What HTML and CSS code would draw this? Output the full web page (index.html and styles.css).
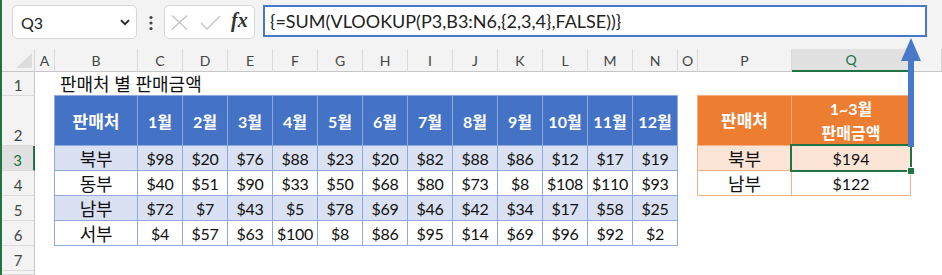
FILE: index.html
```html
<!DOCTYPE html>
<html lang="ko">
<head>
  <meta charset="UTF-8">
  <title>판매처 별 판매금액</title>
  <link rel="stylesheet" href="styles.css">
</head>
<body>
  <div class="app">
    <div class="toolbar">
      <div class="namebox">
        <span>Q3</span>
        <svg width="10" height="7" viewBox="0 0 10 7"><path d="M1 1.2 L5 5.2 L9 1.2" fill="none" stroke="#222" stroke-width="1.8"/></svg>
      </div>
      <svg class="dots" width="6" height="16" viewBox="0 0 6 16"><circle cx="3" cy="2.5" r="1.6" fill="#444"/><circle cx="3" cy="8" r="1.6" fill="#444"/><circle cx="3" cy="13.5" r="1.6" fill="#444"/></svg>
      <div class="fxbox">
        <svg width="17" height="15" viewBox="0 0 17 15"><path d="M1 0.5 L16 14.5 M16 0.5 L1 14.5" stroke="#c4c4c4" stroke-width="1.4" fill="none"/></svg>
        <svg width="21" height="15" viewBox="0 0 21 15"><path d="M1 8 L7 14 L20 1" stroke="#c4c4c4" stroke-width="1.4" fill="none"/></svg>
        <span class="fx">fx</span>
      </div>
      <div class="formula">{=SUM(VLOOKUP(P3,B3:N6,{2,3,4},FALSE))}</div>
    </div>

    <div class="sheet">
      <div class="corner"><svg width="18" height="16" viewBox="0 0 18 16"><polygon points="17,0 17,15 1,15" fill="#dcdcdc"/></svg></div>
      <div class="colhead">A</div>
      <div class="colhead">B</div>
      <div class="colhead">C</div>
      <div class="colhead">D</div>
      <div class="colhead">E</div>
      <div class="colhead">F</div>
      <div class="colhead">G</div>
      <div class="colhead">H</div>
      <div class="colhead">I</div>
      <div class="colhead">J</div>
      <div class="colhead">K</div>
      <div class="colhead">L</div>
      <div class="colhead">M</div>
      <div class="colhead">N</div>
      <div class="colhead">O</div>
      <div class="colhead">P</div>
      <div class="colhead active">Q</div>
      <div class="colhead"></div>

      <div class="rowhead r1">1</div>
      <div class="rowhead r2">2</div>
      <div class="rowhead r3 active">3</div>
      <div class="rowhead r4">4</div>
      <div class="rowhead r5">5</div>
      <div class="rowhead r6">6</div>
      <div class="rowhead r7">7</div>
      <div class="rowhead r8"></div>

      <div class="title">판매처 별 판매금액</div>

      <div class="sales">
        <div class="th name">판매처</div>
        <div class="th">1월</div><div class="th">2월</div><div class="th">3월</div><div class="th">4월</div>
        <div class="th">5월</div><div class="th">6월</div><div class="th">7월</div><div class="th">8월</div>
        <div class="th">9월</div><div class="th">10월</div><div class="th">11월</div><div class="th">12월</div>

        <div class="td band name">북부</div>
        <div class="td band">$98</div><div class="td band">$20</div><div class="td band">$76</div><div class="td band">$88</div>
        <div class="td band">$23</div><div class="td band">$20</div><div class="td band">$82</div><div class="td band">$88</div>
        <div class="td band">$86</div><div class="td band">$12</div><div class="td band">$17</div><div class="td band">$19</div>

        <div class="td name">동부</div>
        <div class="td">$40</div><div class="td">$51</div><div class="td">$90</div><div class="td">$33</div>
        <div class="td">$50</div><div class="td">$68</div><div class="td">$80</div><div class="td">$73</div>
        <div class="td">$8</div><div class="td">$108</div><div class="td">$110</div><div class="td">$93</div>

        <div class="td band name">남부</div>
        <div class="td band">$72</div><div class="td band">$7</div><div class="td band">$43</div><div class="td band">$5</div>
        <div class="td band">$78</div><div class="td band">$69</div><div class="td band">$46</div><div class="td band">$42</div>
        <div class="td band">$34</div><div class="td band">$17</div><div class="td band">$58</div><div class="td band">$25</div>

        <div class="td name">서부</div>
        <div class="td">$4</div><div class="td">$57</div><div class="td">$63</div><div class="td">$100</div>
        <div class="td">$8</div><div class="td">$86</div><div class="td">$95</div><div class="td">$14</div>
        <div class="td">$69</div><div class="td">$96</div><div class="td">$92</div><div class="td">$2</div>
      </div>

      <div class="lookup">
        <div class="oh name">판매처</div>
        <div class="oh">1~3월<br>판매금액</div>
        <div class="od band name">북부</div>
        <div class="od band selected">$194</div>
        <div class="od name">남부</div>
        <div class="od">$122</div>
      </div>
    </div>

    <svg class="arrow" width="22" height="110" viewBox="0 0 22 110">
      <polygon points="11,0 21,23 1,23" fill="#4a78c8"/>
      <rect x="8" y="22" width="6" height="87" fill="#4a78c8"/>
    </svg>
  </div>
</body>
</html>
```

FILE: styles.css
```css
body {
  margin: 0;
  background-color: #fff;
  font-family: "Lato", "Noto Sans CJK KR", sans-serif;
  color: #111;
  overflow: hidden;
}
.app {
  position: relative;
  border-left: 2px solid #217346;
  height: 275px;
  box-sizing: border-box;
  overflow: hidden;
}

/* formula bar */
.toolbar {
  height: 49px;
  background-color: #f3f3f3;
  display: flex;
  align-items: flex-start;
  padding-top: 5px;
  padding-left: 10px;
  box-sizing: border-box;
}
.namebox {
  width: 125px;
  height: 34px;
  box-sizing: border-box;
  background-color: #fff;
  border: 1px solid #d6d6d6;
  border-radius: 5px;
  display: flex;
  align-items: center;
  justify-content: space-between;
  padding: 0 6px 0 8px;
  font-size: 16px;
  color: #222;
}
.dots {
  margin: 10px 0 0 11px;
}
.fxbox {
  width: 91px;
  height: 34px;
  margin-left: 10px;
  box-sizing: border-box;
  background-color: #fff;
  border: 1px solid #d6d6d6;
  border-radius: 5px;
  display: flex;
  align-items: center;
  padding-left: 6px;
  gap: 12px;
}
.fx {
  font-family: "Liberation Serif", serif;
  font-style: italic;
  font-weight: bold;
  font-size: 20px;
  color: #333;
  margin-left: -2px;
  margin-top: -3px;
}
.formula {
  margin-left: 8px;
  width: 664px;
  height: 32px;
  box-sizing: border-box;
  background-color: #fff;
  border: 2px solid #4a78c8;
  padding-left: 5px;
  font-size: 18px;
  line-height: 28px;
  color: #222;
}

/* sheet grid */
.sheet {
  height: 226px;
  display: grid;
  grid-template-columns: 33px 20px 83px repeat(12, 45px) 20px 94px 119px 1fr;
  grid-template-rows: 23px 24px 50px 25px 25px 25px 25px 25px 1fr;
}
.corner {
  grid-row: 1;
  grid-column: 1;
  background-color: #f3f3f3;
  border-right: 1px solid #d5d5d5;
  border-bottom: 1px solid #c6c6c6;
  display: flex;
  align-items: flex-end;
  justify-content: flex-end;
  padding: 0 1px 2px 0;
}
.colhead {
  grid-row: 1;
  background-color: #f3f3f3;
  border-right: 1px solid #dadada;
  border-bottom: 1px solid #c6c6c6;
  font-size: 14px;
  color: #444;
  display: flex;
  align-items: center;
  justify-content: center;
}
.colhead.active {
  background-color: #e1e1e1;
  color: #217346;
  border-bottom: 2px solid #217346;
}
.rowhead {
  grid-column: 1;
  background-color: #f3f3f3;
  border-right: 1px solid #c6c6c6;
  border-bottom: 1px solid #dadada;
  font-size: 15px;
  color: #444;
  display: flex;
  align-items: flex-end;
  justify-content: center;
  padding-bottom: 1px;
}
.rowhead.active {
  background-color: #e1e1e1;
  color: #217346;
  border-right: 2px solid #217346;
}
.r1 { grid-row: 2; }
.r2 { grid-row: 3; }
.r3 { grid-row: 4; }
.r4 { grid-row: 5; }
.r5 { grid-row: 6; }
.r6 { grid-row: 7; }
.r7 { grid-row: 8; }
.r8 { grid-row: 9; }

.title {
  grid-column: 3 / span 6;
  grid-row: 2;
  font-size: 18px;
  padding-left: 5px;
  line-height: 24px;
}

/* sales table B2:N6 */
.sales {
  grid-column: 3 / span 13;
  grid-row: 3 / span 5;
  display: grid;
  grid-template-columns: 83px repeat(12, 45px);
  grid-template-rows: 50px repeat(4, 25px);
  margin: -1px 0 0 -1px;
  border-left: 1px solid #8ea9db;
  border-top: 1px solid #8ea9db;
}
.th, .td {
  box-sizing: border-box;
  border-right: 1px solid #8ea9db;
  border-bottom: 1px solid #8ea9db;
  display: flex;
  align-items: center;
  justify-content: center;
  white-space: nowrap;
}
.th {
  background-color: #4472c4;
  color: #fff;
  font-weight: bold;
  font-size: 16px;
}
.td {
  font-size: 16px;
  letter-spacing: -0.3px;
}
.td.band {
  background-color: #d9e1f2;
}
.td.name, .od.name {
  font-size: 18px;
}
.th.name, .oh.name {
  font-size: 17px;
}

/* lookup table P2:Q4 */
.lookup {
  grid-column: 17 / span 2;
  grid-row: 3 / span 3;
  display: grid;
  grid-template-columns: 94px 119px;
  grid-template-rows: 50px 25px 25px;
  margin: -1px 0 0 -1px;
  border-left: 1px solid #f4b084;
  border-top: 1px solid #f4b084;
}
.oh, .od {
  box-sizing: border-box;
  border-right: 1px solid #f4b084;
  border-bottom: 1px solid #f4b084;
  display: flex;
  align-items: center;
  justify-content: center;
  text-align: center;
}
.oh {
  background-color: #ed7d31;
  color: #fff;
  font-weight: bold;
  font-size: 16px;
  line-height: 24px;
}
.od {
  font-size: 16px;
}
.od.band {
  background-color: #fce4d6;
}
.selected {
  position: relative;
}
.selected::after {
  content: "";
  position: absolute;
  top: -2px;
  left: -2px;
  right: -2px;
  bottom: -2px;
  border: 2px solid #217346;
}
.selected::before {
  content: "";
  position: absolute;
  right: -5px;
  bottom: -5px;
  width: 6px;
  height: 6px;
  background-color: #217346;
  border: 1px solid #fff;
  z-index: 1;
}

.arrow {
  position: absolute;
  left: 898px;
  top: 38px;
}
```
